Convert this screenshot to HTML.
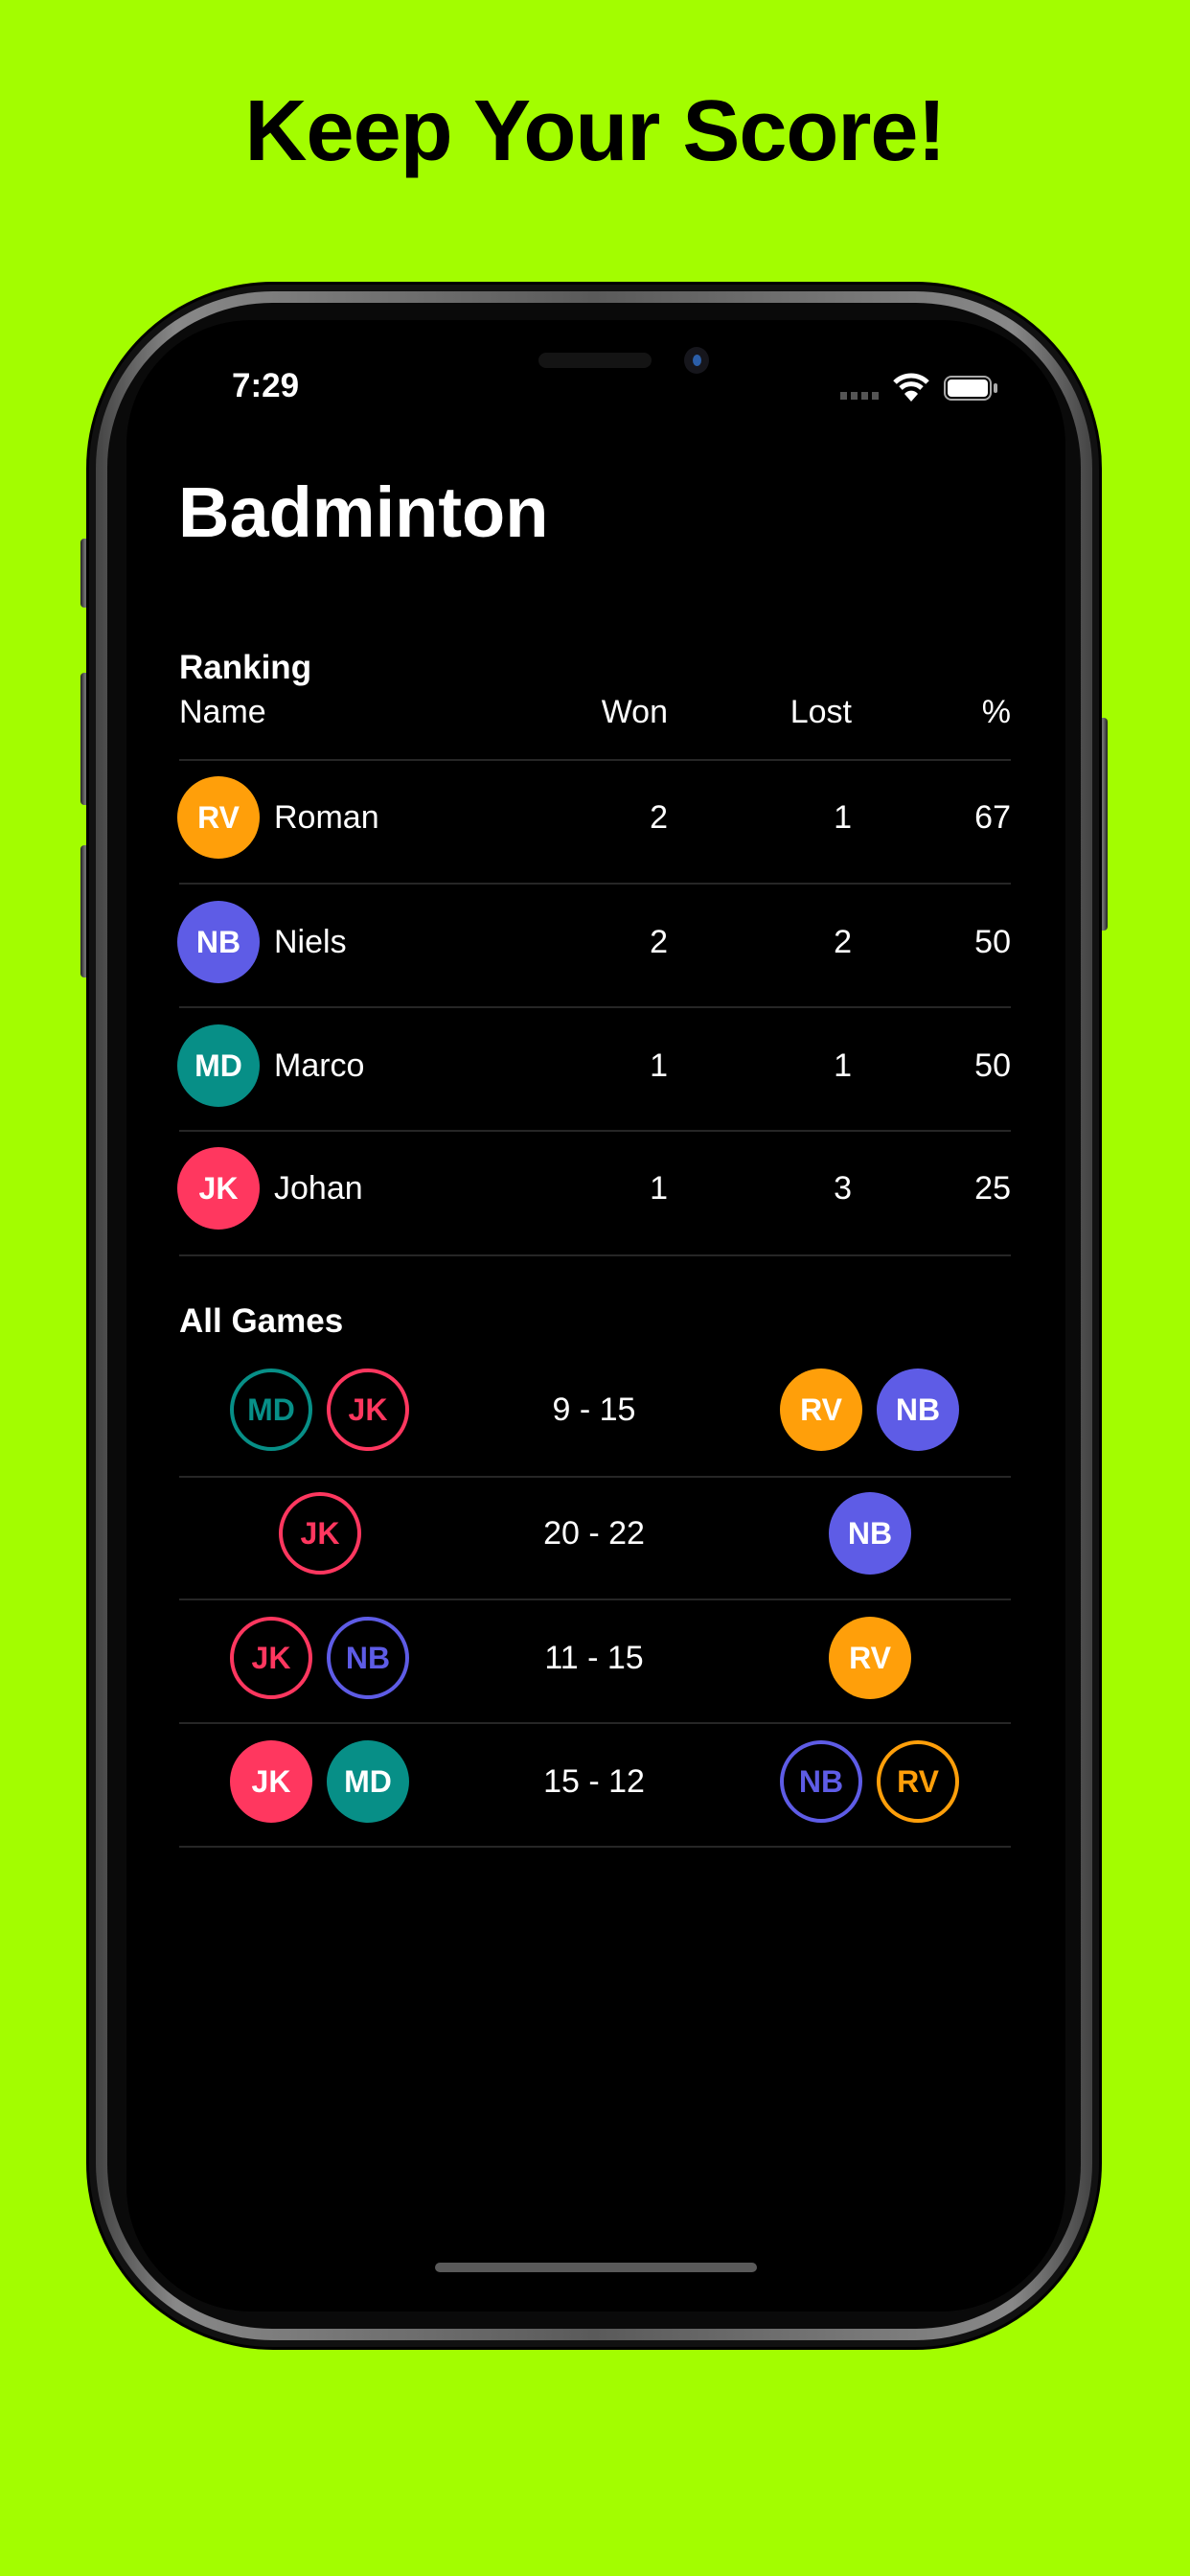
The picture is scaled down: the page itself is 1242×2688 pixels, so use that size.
<!DOCTYPE html>
<html><head><meta charset="utf-8"><style>
*{margin:0;padding:0;box-sizing:border-box}
body{width:1242px;height:2688px;background:#a3fd00;position:relative;overflow:hidden;font-family:"Liberation Sans",sans-serif;color:#fff}
.abs{position:absolute}
h1{position:absolute;left:0;width:1242px;top:86px;text-align:center;font-size:90px;font-weight:bold;color:#000;letter-spacing:-1px}
.btn{position:absolute;background:linear-gradient(90deg,#222,#777,#222);border-radius:4px}
.outer{left:90px;top:294px;width:1060px;height:2158px;border-radius:195px;background:#111;border:3px solid #000}
.ring{left:100px;top:304px;width:1040px;height:2138px;border-radius:185px;background:linear-gradient(90deg,#444,#888 8%,#5a5a5a 50%,#888 92%,#444)}
.ring2{left:112px;top:316px;width:1016px;height:2114px;border-radius:172px;background:#0a0a0a}
.screen{left:132px;top:334px;width:980px;height:2078px;border-radius:130px;background:#000;overflow:hidden}
.t{position:absolute;font-size:34px;line-height:40px}
.c{position:absolute;width:86px;height:86px;border-radius:50%;display:flex;align-items:center;justify-content:center;font-size:32px;font-weight:bold}
.hl{position:absolute;left:187px;width:868px;height:2px;background:#262626}
.r{text-align:right}
</style></head><body>
<h1>Keep Your Score!</h1>
<div class="btn" style="left:84px;top:562px;width:10px;height:72px"></div>
<div class="btn" style="left:84px;top:702px;width:10px;height:138px"></div>
<div class="btn" style="left:84px;top:882px;width:10px;height:138px"></div>
<div class="btn" style="left:1146px;top:749px;width:10px;height:222px"></div>
<div class="abs outer"></div>
<div class="abs ring"></div>
<div class="abs ring2"></div>
<div class="abs screen"></div>
<div class="abs" style="left:562px;top:368px;width:118px;height:16px;border-radius:8px;background:#141414"></div>
<div class="abs" style="left:714px;top:362px;width:26px;height:28px;border-radius:50%;background:#16161c;"><div style="margin:8px auto;width:9px;height:12px;border-radius:50%;background:#2b5ea8"></div></div>
<div class="t" style="left:242px;top:383px;font-weight:bold;font-size:35px">7:29</div>
<div class="abs" style="left:877px;top:409px;width:40px;height:8px;background:repeating-linear-gradient(90deg,#555 0 7px,transparent 7px 11px)"></div>
<svg class="abs" style="left:932px;top:388px" width="38" height="32" viewBox="0 0 38 32"><path d="M2 11 A24 24 0 0 1 36 11" stroke="#fff" stroke-width="5" fill="none"/><path d="M8 17 A16 16 0 0 1 30 17" stroke="#fff" stroke-width="5" fill="none"/><path d="M19 31 L12 23 A9 9 0 0 1 26 23 Z" fill="#fff"/></svg>
<div class="abs" style="left:985px;top:392px;width:50px;height:26px;border:2px solid #aaa;border-radius:8px;padding:2px"><div style="width:100%;height:100%;background:#fff;border-radius:4px"></div></div>
<div class="abs" style="left:1037px;top:400px;width:4px;height:10px;background:#aaa;border-radius:2px"></div>
<div class="t" style="left:186px;top:490px;font-size:74px;line-height:90px;font-weight:bold">Badminton</div>
<div class="t" style="left:187px;top:677px;font-weight:bold;font-size:35px">Ranking</div>
<div class="t" style="left:187px;top:723px">Name</div>
<div class="t r" style="left:497px;width:200px;top:723px">Won</div>
<div class="t r" style="left:689px;width:200px;top:723px">Lost</div>
<div class="t r" style="left:855px;width:200px;top:723px">%</div>
<div class="hl" style="top:792px"></div>
<div class="c" style="left:185px;top:810px;background:#ff9f0a">RV</div><div class="t" style="left:286px;top:833px">Roman</div><div class="t r" style="left:497px;width:200px;top:833px">2</div><div class="t r" style="left:689px;width:200px;top:833px">1</div><div class="t r" style="left:855px;width:200px;top:833px">67</div>
<div class="hl" style="top:921px"></div>
<div class="c" style="left:185px;top:940px;background:#5e5ce6">NB</div><div class="t" style="left:286px;top:963px">Niels</div><div class="t r" style="left:497px;width:200px;top:963px">2</div><div class="t r" style="left:689px;width:200px;top:963px">2</div><div class="t r" style="left:855px;width:200px;top:963px">50</div>
<div class="hl" style="top:1050px"></div>
<div class="c" style="left:185px;top:1069px;background:#078f87">MD</div><div class="t" style="left:286px;top:1092px">Marco</div><div class="t r" style="left:497px;width:200px;top:1092px">1</div><div class="t r" style="left:689px;width:200px;top:1092px">1</div><div class="t r" style="left:855px;width:200px;top:1092px">50</div>
<div class="hl" style="top:1179px"></div>
<div class="c" style="left:185px;top:1197px;background:#ff375f">JK</div><div class="t" style="left:286px;top:1220px">Johan</div><div class="t r" style="left:497px;width:200px;top:1220px">1</div><div class="t r" style="left:689px;width:200px;top:1220px">3</div><div class="t r" style="left:855px;width:200px;top:1220px">25</div>
<div class="hl" style="top:1309px"></div>
<div class="t" style="left:187px;top:1359px;font-weight:bold;font-size:35px">All Games</div>
<div class="c" style="left:240px;top:1428px;border:4px solid #078f87;color:#078f87">MD</div>
<div class="c" style="left:341px;top:1428px;border:4px solid #ff375f;color:#ff375f">JK</div>
<div class="t" style="left:520px;width:200px;text-align:center;top:1451px">9 - 15</div>
<div class="c" style="left:814px;top:1428px;background:#ff9f0a">RV</div>
<div class="c" style="left:915px;top:1428px;background:#5e5ce6">NB</div>
<div class="hl" style="top:1540px"></div>
<div class="c" style="left:291px;top:1557px;border:4px solid #ff375f;color:#ff375f">JK</div>
<div class="t" style="left:520px;width:200px;text-align:center;top:1580px">20 - 22</div>
<div class="c" style="left:865px;top:1557px;background:#5e5ce6">NB</div>
<div class="hl" style="top:1668px"></div>
<div class="c" style="left:240px;top:1687px;border:4px solid #ff375f;color:#ff375f">JK</div>
<div class="c" style="left:341px;top:1687px;border:4px solid #5e5ce6;color:#5e5ce6">NB</div>
<div class="t" style="left:520px;width:200px;text-align:center;top:1710px">11 - 15</div>
<div class="c" style="left:865px;top:1687px;background:#ff9f0a">RV</div>
<div class="hl" style="top:1797px"></div>
<div class="c" style="left:240px;top:1816px;background:#ff375f">JK</div>
<div class="c" style="left:341px;top:1816px;background:#078f87">MD</div>
<div class="t" style="left:520px;width:200px;text-align:center;top:1839px">15 - 12</div>
<div class="c" style="left:814px;top:1816px;border:4px solid #5e5ce6;color:#5e5ce6">NB</div>
<div class="c" style="left:915px;top:1816px;border:4px solid #ff9f0a;color:#ff9f0a">RV</div>
<div class="hl" style="top:1926px"></div>
<div class="abs" style="left:454px;top:2361px;width:336px;height:10px;border-radius:5px;background:#5a5a5a"></div>
</body></html>
